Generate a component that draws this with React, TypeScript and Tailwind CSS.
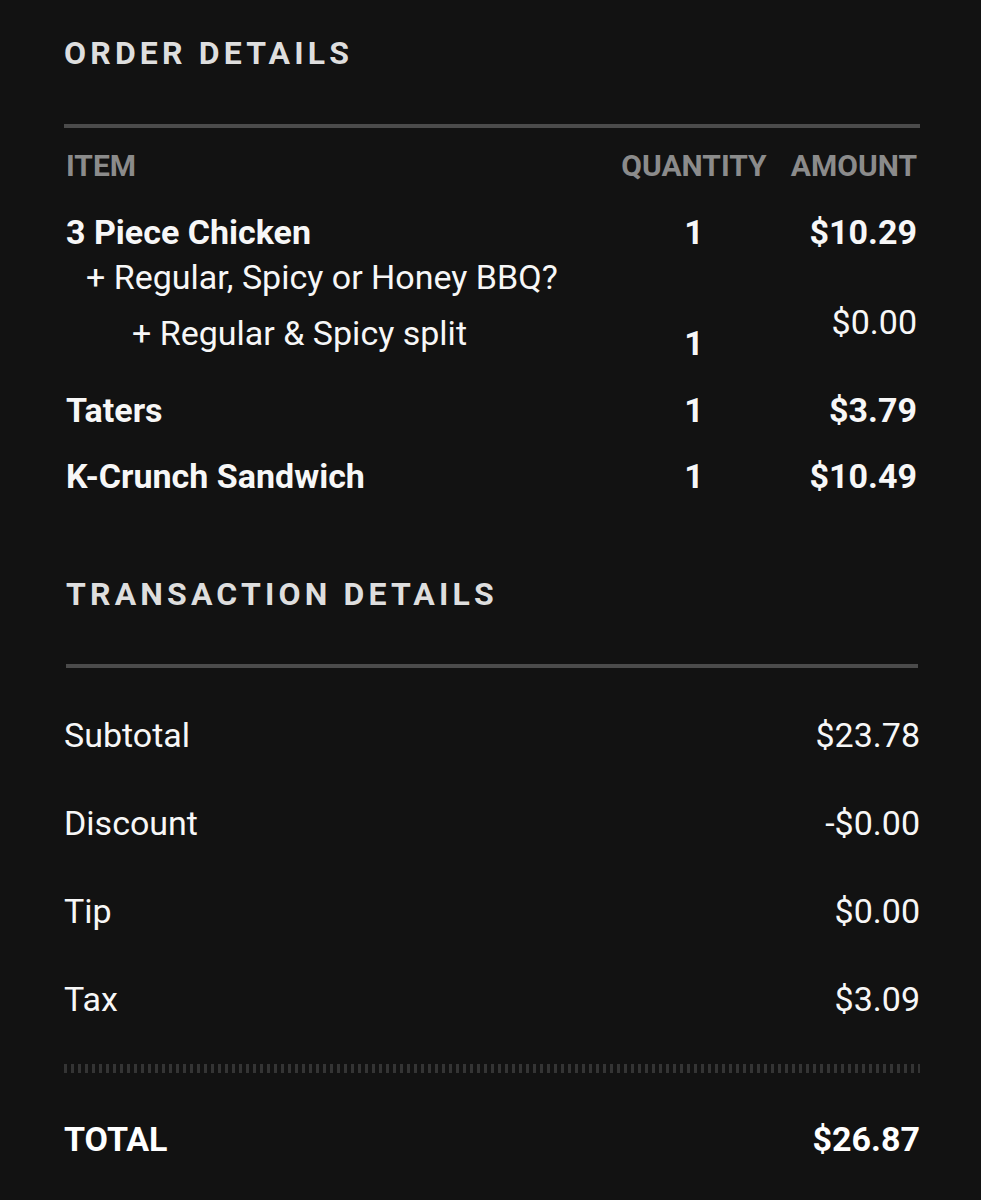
const items = [
  { name: "3 Piece Chicken", qty: "1", amount: "$10.29" },
];

const totals = [
  { label: "Subtotal", value: "$23.78" },
  { label: "Discount", value: "-$0.00" },
  { label: "Tip", value: "$0.00" },
  { label: "Tax", value: "$3.09" },
];

function SectionTitle({ children, className = "" }: { children: React.ReactNode; className?: string }) {
  return (
    <h2 className={`h-[40px] text-[32px] leading-[40px] font-bold tracking-[0.13em] text-[#dedede] ${className}`}>
      {children}
    </h2>
  );
}

export default function App() {
  return (
    <div className="min-h-[1200px] bg-[#121212] pl-[64px] pr-[61px] pt-[33px] pb-[40px] text-[#f7f7f7] font-['Roboto',sans-serif]">
      <SectionTitle>ORDER DETAILS</SectionTitle>
      <div className="mt-[51px] h-[4px] bg-[#4b4b4b]" />

      <div className="pl-[2px] pr-[3px]">
        <div className="mt-[18px] grid grid-cols-[1fr_150px_148px] h-[40px] text-[30px] leading-[40px] font-bold text-[#8b8b8b]">
          <span>ITEM</span>
          <span className="text-center">QUANTITY</span>
          <span className="text-right">AMOUNT</span>
        </div>

        {items.map((it) => (
          <div key={it.name} className="mt-[26px] grid grid-cols-[1fr_150px_148px] h-[40px] text-[34px] leading-[40px] font-bold">
            <span>{it.name}</span>
            <span className="text-center">{it.qty}</span>
            <span className="text-right">{it.amount}</span>
          </div>
        ))}

        <div className="mt-[5px] h-[40px] pl-[20px] text-[34px] leading-[40px]">+ Regular, Spicy or Honey BBQ?</div>

        <div className="grid grid-cols-[1fr_150px_148px] h-[66px] text-[34px] leading-[40px] items-start">
          <span className="mt-[16px] pl-[66px]">+ Regular &amp; Spicy split</span>
          <span className="mt-[26px] text-center font-bold">1</span>
          <span className="mt-[5px] text-right">$0.00</span>
        </div>

        <div className="mt-[27px] grid grid-cols-[1fr_150px_148px] h-[40px] text-[34px] leading-[40px] font-bold">
          <span>Taters</span>
          <span className="text-center">1</span>
          <span className="text-right">$3.79</span>
        </div>

        <div className="mt-[26px] grid grid-cols-[1fr_150px_148px] h-[40px] text-[34px] leading-[40px] font-bold">
          <span>K-Crunch Sandwich</span>
          <span className="text-center">1</span>
          <span className="text-right">$10.49</span>
        </div>
      </div>

      <SectionTitle className="mt-[78px] ml-[2px]">TRANSACTION DETAILS</SectionTitle>
      <div className="mt-[50px] ml-[2px] mr-[2px] h-[4px] bg-[#4b4b4b]" />

      <div className="mt-[47px] flex flex-col gap-[48px] text-[34px] leading-[40px]">
        {totals.map((t) => (
          <div key={t.label} className="flex h-[40px] justify-between">
            <span>{t.label}</span>
            <span>{t.value}</span>
          </div>
        ))}
      </div>

      <div className="mt-[45px] h-[9px] bg-[repeating-linear-gradient(90deg,#343434_0_3px,transparent_3px_7px)]" />

      <div className="mt-[46px] flex h-[40px] justify-between text-[34px] leading-[40px] font-bold text-white">
        <span>TOTAL</span>
        <span>$26.87</span>
      </div>
    </div>
  );
}
